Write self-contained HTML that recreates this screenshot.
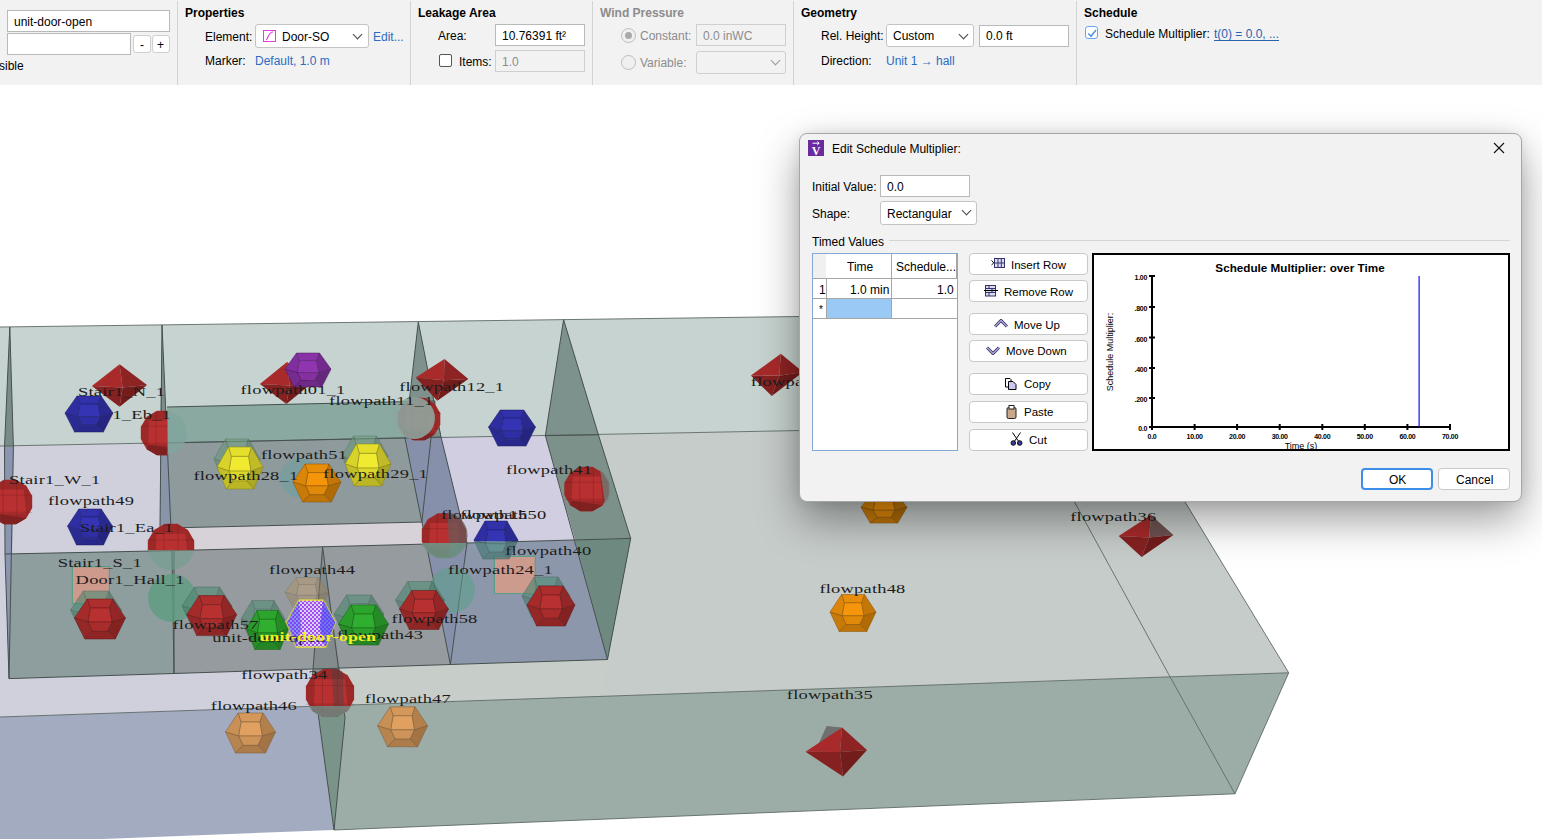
<!DOCTYPE html>
<html><head><meta charset="utf-8">
<style>
html,body{margin:0;padding:0;}
body{width:1542px;height:839px;overflow:hidden;position:relative;background:#fff;font-family:"Liberation Sans",sans-serif;font-size:12px;color:#000;}
.t{position:absolute;white-space:nowrap;line-height:14px;font-size:12px;}
.b{font-weight:bold;}
.lk{color:#2b6cc4;}
.gr{color:#8c8c8c;}
.box{position:absolute;box-sizing:border-box;background:#fff;border:1px solid #b9b9b9;}
.dis{background:#f2f2f2;border-color:#cfcfcf;}
.rnd{border-radius:3px;}
.sep{position:absolute;top:1px;width:1px;height:84px;background:#d3d3d3;}
.chev{position:absolute;width:6px;height:6px;border-right:1px solid #444;border-bottom:1px solid #444;transform:rotate(45deg);}
#tb{position:absolute;left:0;top:0;width:1542px;height:85px;background:#f2f2f2;}
#scene{position:absolute;left:0;top:0;}
</style></head><body>
<svg id="scene" width="1542" height="839" viewBox="0 0 1542 839">
<polygon points="0.0,327.0 1070.4,313.0 1137.8,424.0 0.0,446.0" fill="#c7d3d0" />
<polygon points="0.0,446.0 1137.8,424.0 1288.7,672.8 0.0,717.0" fill="#c6ccc9" />
<polygon points="0.0,446.0 165.0,443.0 441.0,437.0 545.4,435.6 575.0,539.3 337.0,705.4 0.0,717.0" fill="#cfd0dc" />
<polygon points="320.0,670.0 610.0,659.0 600.0,696.4 337.0,705.4" fill="#c7ceca" />
<polygon points="0.0,717.0 337.0,705.4 334.0,830.0 0.0,843.0" fill="#a2abc0" />
<polygon points="337.0,705.4 1288.7,672.8 1235.0,793.8 334.0,830.0" fill="#9cada7" />
<polygon points="167.0,407.0 435.0,401.0 441.0,437.0 167.0,443.0" fill="#8aa9a1" />
<polygon points="167.0,443.0 441.0,437.0 423.0,522.0 167.0,528.0" fill="#8f9a9d" />
<polygon points="165.0,528.0 423.0,522.0 467.0,543.0 174.0,550.6" fill="#d6d2d8" />
<polygon points="5.0,554.0 174.0,550.6 174.0,673.5 9.0,678.6" fill="#8e9d9e" />
<polygon points="174.0,550.6 467.0,543.0 450.4,664.5 174.0,673.5" fill="#959b9e" />
<polygon points="467.0,543.0 630.7,538.4 607.5,659.5 450.4,664.5" fill="#8c97ab" />
<polygon points="441.0,437.0 545.4,435.6 575.0,539.3 467.0,543.0" fill="#d0cee0" />
<polygon points="563.6,319.7 598.4,434.8 545.4,435.6" fill="#7d928c" />
<polygon points="545.4,435.6 598.4,434.8 630.7,538.4 575.0,539.3" fill="#7c918a" />
<polygon points="575.0,539.3 630.7,538.4 607.5,659.5" fill="#6e8a80" />
<polygon points="418.3,322.0 441.0,437.0 405.0,438.0" fill="#7e918d" />
<polygon points="405.0,438.0 441.0,437.0 467.0,543.0 450.4,664.5 422.0,521.0" fill="#8790aa" />
<polygon points="162.0,325.0 167.0,443.0 160.0,443.0" fill="#7c8e8a" />
<polygon points="160.0,443.0 167.0,443.0 175.0,553.0 160.0,527.0" fill="#8a94a8" />
<polygon points="9.8,327.0 13.4,447.0 4.5,447.0" fill="#7a8c88" />
<polygon points="4.5,447.0 13.4,447.0 12.0,560.0 9.0,678.6 5.0,554.0" fill="#8b95b0" />
<polygon points="322.6,547.0 340.5,673.7 312.7,673.7" fill="#838b8d" />
<polygon points="312.7,673.7 340.5,673.7 345.0,718.0 334.0,830.0" fill="#7a948a" />
<polyline points="0.0,327.0 1070.4,313.0" fill="none" stroke="#5f6a67" stroke-width="0.9" stroke-opacity="1"/>
<polyline points="0.0,446.0 1137.8,424.0" fill="none" stroke="#5f6a67" stroke-width="0.9" stroke-opacity="1"/>
<polyline points="0.0,717.0 1288.7,672.8" fill="none" stroke="#5f6a67" stroke-width="0.9" stroke-opacity="1"/>
<polyline points="334.0,830.0 1235.0,793.8 1288.7,672.8" fill="none" stroke="#5f6a67" stroke-width="0.9" stroke-opacity="1"/>
<polyline points="1070.4,313.0 1288.7,672.8" fill="none" stroke="#5f6a67" stroke-width="0.9" stroke-opacity="1"/>
<polyline points="1074.0,501.0 1169.6,676.0 1235.0,793.8" fill="none" stroke="#5f6a67" stroke-width="0.9" stroke-opacity="1"/>
<polyline points="167.0,407.0 435.0,401.0" fill="none" stroke="#46504e" stroke-width="1" stroke-opacity="1"/>
<polyline points="167.0,443.0 441.0,437.0" fill="none" stroke="#46504e" stroke-width="1" stroke-opacity="1"/>
<polyline points="167.0,528.0 423.0,522.0" fill="none" stroke="#46504e" stroke-width="1" stroke-opacity="1"/>
<polyline points="5.0,554.0 174.0,550.6 467.0,543.0 630.7,538.4" fill="none" stroke="#46504e" stroke-width="1" stroke-opacity="1"/>
<polyline points="9.0,678.6 174.0,673.5 450.4,664.5 607.5,659.5" fill="none" stroke="#46504e" stroke-width="1" stroke-opacity="1"/>
<polyline points="5.0,554.0 9.0,678.6" fill="none" stroke="#46504e" stroke-width="1" stroke-opacity="1"/>
<polyline points="174.0,550.0 174.0,673.5" fill="none" stroke="#46504e" stroke-width="1" stroke-opacity="1"/>
<polyline points="563.6,319.7 598.4,434.8 630.7,538.4 607.5,659.5" fill="none" stroke="#46504e" stroke-width="1" stroke-opacity="1"/>
<polyline points="563.6,319.7 545.4,435.6 607.5,659.5" fill="none" stroke="#46504e" stroke-width="1" stroke-opacity="1"/>
<polyline points="545.4,435.6 598.4,434.8" fill="none" stroke="#46504e" stroke-width="1" stroke-opacity="1"/>
<polyline points="418.3,322.0 441.0,437.0 467.0,543.0 450.4,664.5 405.0,438.0 418.3,322.0" fill="none" stroke="#46504e" stroke-width="1" stroke-opacity="1"/>
<polyline points="435.0,401.0 422.0,521.0" fill="none" stroke="#46504e" stroke-width="1" stroke-opacity="1"/>
<polyline points="162.0,325.0 172.0,553.0 174.0,673.5" fill="none" stroke="#46504e" stroke-width="1" stroke-opacity="1"/>
<polyline points="162.0,325.0 160.0,527.0" fill="none" stroke="#46504e" stroke-width="1" stroke-opacity="1"/>
<polyline points="9.8,327.0 13.4,447.0 9.0,678.6" fill="none" stroke="#46504e" stroke-width="1" stroke-opacity="1"/>
<polyline points="9.8,327.0 4.5,447.0 5.0,554.0" fill="none" stroke="#46504e" stroke-width="1" stroke-opacity="1"/>
<polyline points="322.6,547.0 345.0,718.0 334.0,830.0 312.7,673.7 322.6,547.0" fill="none" stroke="#46504e" stroke-width="1" stroke-opacity="1"/>
<polygon points="119.6,364.2 122.6,387.5 91.9,386.0" fill="#a82a2a" />
<polygon points="119.6,364.2 147.0,385.0 122.6,387.5" fill="#8e2323" />
<polygon points="91.9,386.0 122.6,387.5 119.6,406.7" fill="#862121" />
<polygon points="122.6,387.5 147.0,385.0 119.6,406.7" fill="#721c1c" />
<polygon points="287.0,362.0 289.7,385.5 259.9,384.0" fill="#a82a2a" />
<polygon points="287.0,362.0 312.0,383.0 289.7,385.5" fill="#8e2323" />
<polygon points="259.9,384.0 289.7,385.5 286.4,404.0" fill="#862121" />
<polygon points="289.7,385.5 312.0,383.0 286.4,404.0" fill="#721c1c" />
<polygon points="444.5,358.9 443.9,380.2 415.6,377.5" fill="#a82a2a" />
<polygon points="444.5,358.9 468.3,379.0 443.9,380.2" fill="#8e2323" />
<polygon points="415.6,377.5 443.9,380.2 437.3,400.7" fill="#862121" />
<polygon points="443.9,380.2 468.3,379.0 437.3,400.7" fill="#721c1c" />
<polygon points="780.8,353.7 779.3,375.8 750.8,375.6" fill="#a82a2a" />
<polygon points="780.8,353.7 803.0,372.0 779.3,375.8" fill="#8e2323" />
<polygon points="750.8,375.6 779.3,375.8 771.8,396.0" fill="#862121" />
<polygon points="779.3,375.8 803.0,372.0 771.8,396.0" fill="#721c1c" />
<polygon points="1151.0,515.0 1149.3,537.5 1118.7,536.0" fill="#a82a2a" />
<polygon points="1151.0,515.0 1173.4,535.0 1149.3,537.5" fill="#6e5250" />
<polygon points="1118.7,536.0 1149.3,537.5 1141.6,557.0" fill="#862121" />
<polygon points="1149.3,537.5 1173.4,535.0 1141.6,557.0" fill="#721c1c" />
<polygon points="826.6,726.0 842.0,727.6 818.0,745.0" fill="#707070" />
<polygon points="842.0,727.6 840.0,752.0 805.5,751.8" fill="#a82a2a" />
<polygon points="842.0,727.6 867.0,750.0 840.0,752.0" fill="#8e2323" />
<polygon points="805.5,751.8 840.0,752.0 843.0,776.5" fill="#862121" />
<polygon points="840.0,752.0 867.0,750.0 843.0,776.5" fill="#721c1c" />
<circle cx="300" cy="478" r="20" fill="#6aa0a0" fill-opacity="0.5"/>
<circle cx="172" cy="598" r="24" fill="#5c9e80" fill-opacity="0.78"/>
<circle cx="452" cy="590" r="23" fill="#5aa088" fill-opacity="0.55"/>
<g opacity="0.45">
<polygon points="296.0,577.5 318.0,577.5 315.4,584.5 298.6,584.5" fill="#be986a" stroke="#6e583d" stroke-width="0.5" />
<polygon points="298.6,584.5 315.4,584.5 317.6,595.3 296.4,595.3" fill="#c8a070" stroke="#6e583d" stroke-width="0.5" />
<polygon points="285.0,592.2 296.0,577.5 298.6,584.5 296.4,595.3" fill="#b49064" stroke="#6e583d" stroke-width="0.5" />
<polygon points="329.0,592.2 318.0,577.5 315.4,584.5 317.6,595.3" fill="#a08059" stroke="#6e583d" stroke-width="0.5" />
<polygon points="296.4,595.3 317.6,595.3 313.6,602.6 300.4,602.6" fill="#b89367" stroke="#6e583d" stroke-width="0.5" />
<polygon points="285.0,592.2 296.4,595.3 300.4,602.6 293.8,608.5" fill="#a4835b" stroke="#6e583d" stroke-width="0.5" />
<polygon points="329.0,592.2 317.6,595.3 313.6,602.6 320.2,608.5" fill="#907350" stroke="#6e583d" stroke-width="0.5" />
<polygon points="300.4,602.6 313.6,602.6 320.2,608.5 293.8,608.5" fill="#9c7c57" stroke="#6e583d" stroke-width="0.5" />
</g>
<polygon points="72.4,566.7 109.4,566.7 109.4,603.7 72.4,603.7" fill="#d89a88" fill-opacity="0.85" stroke="#5aa088" stroke-width="1.2" />
<polygon points="494.4,556.3 535.3,556.3 535.3,593.5 494.4,593.5" fill="#d89a88" fill-opacity="0.85" stroke="#5aa088" stroke-width="1.2" />
<g opacity="1">
<polygon points="77.0,396.0 101.0,396.0 98.1,404.1 79.9,404.1" fill="#3131ab" stroke="#1c1c63" stroke-width="0.5" />
<polygon points="79.9,404.1 98.1,404.1 100.5,416.7 77.5,416.7" fill="#3434b4" stroke="#1c1c63" stroke-width="0.5" />
<polygon points="65.0,413.1 77.0,396.0 79.9,404.1 77.5,416.7" fill="#2e2ea2" stroke="#1c1c63" stroke-width="0.5" />
<polygon points="113.0,413.1 101.0,396.0 98.1,404.1 100.5,416.7" fill="#292990" stroke="#1c1c63" stroke-width="0.5" />
<polygon points="77.5,416.7 100.5,416.7 96.2,425.2 81.8,425.2" fill="#2f2fa5" stroke="#1c1c63" stroke-width="0.5" />
<polygon points="65.0,413.1 77.5,416.7 81.8,425.2 74.6,432.0" fill="#2a2a93" stroke="#1c1c63" stroke-width="0.5" />
<polygon points="113.0,413.1 100.5,416.7 96.2,425.2 103.4,432.0" fill="#252581" stroke="#1c1c63" stroke-width="0.5" />
<polygon points="81.8,425.2 96.2,425.2 103.4,432.0 74.6,432.0" fill="#28288c" stroke="#1c1c63" stroke-width="0.5" />
</g>
<g opacity="1">
<polygon points="78.8,509.0 101.2,509.0 98.5,517.1 81.5,517.1" fill="#3131ab" stroke="#1c1c63" stroke-width="0.5" />
<polygon points="81.5,517.1 98.5,517.1 100.8,529.7 79.2,529.7" fill="#3434b4" stroke="#1c1c63" stroke-width="0.5" />
<polygon points="67.5,526.1 78.8,509.0 81.5,517.1 79.2,529.7" fill="#2e2ea2" stroke="#1c1c63" stroke-width="0.5" />
<polygon points="112.5,526.1 101.2,509.0 98.5,517.1 100.8,529.7" fill="#292990" stroke="#1c1c63" stroke-width="0.5" />
<polygon points="79.2,529.7 100.8,529.7 96.8,538.2 83.2,538.2" fill="#2f2fa5" stroke="#1c1c63" stroke-width="0.5" />
<polygon points="67.5,526.1 79.2,529.7 83.2,538.2 76.5,545.0" fill="#2a2a93" stroke="#1c1c63" stroke-width="0.5" />
<polygon points="112.5,526.1 100.8,529.7 96.8,538.2 103.5,545.0" fill="#252581" stroke="#1c1c63" stroke-width="0.5" />
<polygon points="83.2,538.2 96.8,538.2 103.5,545.0 76.5,545.0" fill="#28288c" stroke="#1c1c63" stroke-width="0.5" />
</g>
<g opacity="1">
<polygon points="500.2,410.0 523.8,410.0 520.9,418.1 503.1,418.1" fill="#3131ab" stroke="#1c1c63" stroke-width="0.5" />
<polygon points="503.1,418.1 520.9,418.1 523.3,430.7 500.7,430.7" fill="#3434b4" stroke="#1c1c63" stroke-width="0.5" />
<polygon points="488.5,427.1 500.2,410.0 503.1,418.1 500.7,430.7" fill="#2e2ea2" stroke="#1c1c63" stroke-width="0.5" />
<polygon points="535.5,427.1 523.8,410.0 520.9,418.1 523.3,430.7" fill="#292990" stroke="#1c1c63" stroke-width="0.5" />
<polygon points="500.7,430.7 523.3,430.7 519.0,439.2 504.9,439.2" fill="#2f2fa5" stroke="#1c1c63" stroke-width="0.5" />
<polygon points="488.5,427.1 500.7,430.7 504.9,439.2 497.9,446.0" fill="#2a2a93" stroke="#1c1c63" stroke-width="0.5" />
<polygon points="535.5,427.1 523.3,430.7 519.0,439.2 526.1,446.0" fill="#252581" stroke="#1c1c63" stroke-width="0.5" />
<polygon points="504.9,439.2 519.0,439.2 526.1,446.0 497.9,446.0" fill="#28288c" stroke="#1c1c63" stroke-width="0.5" />
</g>
<clipPath id="bg40a"><rect x="460" y="500" width="80" height="41.5"/></clipPath><g clip-path="url(#bg40a)">
<g opacity="1">
<polygon points="485.0,521.0 507.0,521.0 504.4,530.0 487.6,530.0" fill="#3131ab" stroke="#1c1c63" stroke-width="0.5" />
<polygon points="487.6,530.0 504.4,530.0 506.6,544.0 485.4,544.0" fill="#3434b4" stroke="#1c1c63" stroke-width="0.5" />
<polygon points="474.0,540.0 485.0,521.0 487.6,530.0 485.4,544.0" fill="#2e2ea2" stroke="#1c1c63" stroke-width="0.5" />
<polygon points="518.0,540.0 507.0,521.0 504.4,530.0 506.6,544.0" fill="#292990" stroke="#1c1c63" stroke-width="0.5" />
<polygon points="485.4,544.0 506.6,544.0 502.6,553.4 489.4,553.4" fill="#2f2fa5" stroke="#1c1c63" stroke-width="0.5" />
<polygon points="474.0,540.0 485.4,544.0 489.4,553.4 482.8,561.0" fill="#2a2a93" stroke="#1c1c63" stroke-width="0.5" />
<polygon points="518.0,540.0 506.6,544.0 502.6,553.4 509.2,561.0" fill="#252581" stroke="#1c1c63" stroke-width="0.5" />
<polygon points="489.4,553.4 502.6,553.4 509.2,561.0 482.8,561.0" fill="#28288c" stroke="#1c1c63" stroke-width="0.5" />
</g>
</g>
<clipPath id="bg40b"><rect x="460" y="541.5" width="80" height="30"/></clipPath><g clip-path="url(#bg40b)">
<g opacity="0.75">
<polygon points="485.0,523.0 507.0,523.0 504.4,531.1 487.6,531.1" fill="#5a9290" stroke="#345453" stroke-width="0.5" />
<polygon points="487.6,531.1 504.4,531.1 506.6,543.7 485.4,543.7" fill="#5f9a98" stroke="#345453" stroke-width="0.5" />
<polygon points="474.0,540.1 485.0,523.0 487.6,531.1 485.4,543.7" fill="#558a88" stroke="#345453" stroke-width="0.5" />
<polygon points="518.0,540.1 507.0,523.0 504.4,531.1 506.6,543.7" fill="#4c7b79" stroke="#345453" stroke-width="0.5" />
<polygon points="485.4,543.7 506.6,543.7 502.6,552.2 489.4,552.2" fill="#578d8b" stroke="#345453" stroke-width="0.5" />
<polygon points="474.0,540.1 485.4,543.7 489.4,552.2 482.8,559.0" fill="#4d7e7c" stroke="#345453" stroke-width="0.5" />
<polygon points="518.0,540.1 506.6,543.7 502.6,552.2 509.2,559.0" fill="#446e6d" stroke="#345453" stroke-width="0.5" />
<polygon points="489.4,552.2 502.6,552.2 509.2,559.0 482.8,559.0" fill="#4a7876" stroke="#345453" stroke-width="0.5" />
</g>
</g>
<g opacity="1">
<polygon points="296.5,353.0 319.5,353.0 316.7,360.6 299.3,360.6" fill="#8832a7" stroke="#4f1d60" stroke-width="0.5" />
<polygon points="299.3,360.6 316.7,360.6 319.0,372.6 297.0,372.6" fill="#9035b0" stroke="#4f1d60" stroke-width="0.5" />
<polygon points="285.0,369.1 296.5,353.0 299.3,360.6 297.0,372.6" fill="#812f9e" stroke="#4f1d60" stroke-width="0.5" />
<polygon points="331.0,369.1 319.5,353.0 316.7,360.6 319.0,372.6" fill="#732a8c" stroke="#4f1d60" stroke-width="0.5" />
<polygon points="297.0,372.6 319.0,372.6 314.9,380.5 301.1,380.5" fill="#8430a1" stroke="#4f1d60" stroke-width="0.5" />
<polygon points="285.0,369.1 297.0,372.6 301.1,380.5 294.2,387.0" fill="#762b90" stroke="#4f1d60" stroke-width="0.5" />
<polygon points="331.0,369.1 319.0,372.6 314.9,380.5 321.8,387.0" fill="#67267e" stroke="#4f1d60" stroke-width="0.5" />
<polygon points="301.1,380.5 314.9,380.5 321.8,387.0 294.2,387.0" fill="#702989" stroke="#4f1d60" stroke-width="0.5" />
</g>
<g opacity="0.65">
<polygon points="225.5,439.0 248.5,439.0 245.7,448.4 228.3,448.4" fill="#739f83" stroke="#435c4b" stroke-width="0.5" />
<polygon points="228.3,448.4 245.7,448.4 248.0,463.1 226.0,463.1" fill="#7aa88a" stroke="#435c4b" stroke-width="0.5" />
<polygon points="214.0,458.9 225.5,439.0 228.3,448.4 226.0,463.1" fill="#6d977c" stroke="#435c4b" stroke-width="0.5" />
<polygon points="260.0,458.9 248.5,439.0 245.7,448.4 248.0,463.1" fill="#61866e" stroke="#435c4b" stroke-width="0.5" />
<polygon points="226.0,463.1 248.0,463.1 243.9,473.0 230.1,473.0" fill="#709a7e" stroke="#435c4b" stroke-width="0.5" />
<polygon points="214.0,458.9 226.0,463.1 230.1,473.0 223.2,481.0" fill="#648971" stroke="#435c4b" stroke-width="0.5" />
<polygon points="260.0,458.9 248.0,463.1 243.9,473.0 250.8,481.0" fill="#577863" stroke="#435c4b" stroke-width="0.5" />
<polygon points="230.1,473.0 243.9,473.0 250.8,481.0 223.2,481.0" fill="#5f836b" stroke="#435c4b" stroke-width="0.5" />
</g>
<g opacity="1">
<polygon points="228.5,447.0 251.5,447.0 248.7,456.4 231.3,456.4" fill="#e4de2d" stroke="#84801a" stroke-width="0.5" />
<polygon points="231.3,456.4 248.7,456.4 251.0,471.1 229.0,471.1" fill="#f0ea30" stroke="#84801a" stroke-width="0.5" />
<polygon points="217.0,466.9 228.5,447.0 231.3,456.4 229.0,471.1" fill="#d8d22b" stroke="#84801a" stroke-width="0.5" />
<polygon points="263.0,466.9 251.5,447.0 248.7,456.4 251.0,471.1" fill="#c0bb26" stroke="#84801a" stroke-width="0.5" />
<polygon points="229.0,471.1 251.0,471.1 246.9,481.0 233.1,481.0" fill="#dcd72c" stroke="#84801a" stroke-width="0.5" />
<polygon points="217.0,466.9 229.0,471.1 233.1,481.0 226.2,489.0" fill="#c4bf27" stroke="#84801a" stroke-width="0.5" />
<polygon points="263.0,466.9 251.0,471.1 246.9,481.0 253.8,489.0" fill="#aca822" stroke="#84801a" stroke-width="0.5" />
<polygon points="233.1,481.0 246.9,481.0 253.8,489.0 226.2,489.0" fill="#bbb625" stroke="#84801a" stroke-width="0.5" />
</g>
<g opacity="0.65">
<polygon points="353.5,436.0 376.5,436.0 373.7,445.4 356.3,445.4" fill="#739f83" stroke="#435c4b" stroke-width="0.5" />
<polygon points="356.3,445.4 373.7,445.4 376.0,460.1 354.0,460.1" fill="#7aa88a" stroke="#435c4b" stroke-width="0.5" />
<polygon points="342.0,455.9 353.5,436.0 356.3,445.4 354.0,460.1" fill="#6d977c" stroke="#435c4b" stroke-width="0.5" />
<polygon points="388.0,455.9 376.5,436.0 373.7,445.4 376.0,460.1" fill="#61866e" stroke="#435c4b" stroke-width="0.5" />
<polygon points="354.0,460.1 376.0,460.1 371.9,470.0 358.1,470.0" fill="#709a7e" stroke="#435c4b" stroke-width="0.5" />
<polygon points="342.0,455.9 354.0,460.1 358.1,470.0 351.2,478.0" fill="#648971" stroke="#435c4b" stroke-width="0.5" />
<polygon points="388.0,455.9 376.0,460.1 371.9,470.0 378.8,478.0" fill="#577863" stroke="#435c4b" stroke-width="0.5" />
<polygon points="358.1,470.0 371.9,470.0 378.8,478.0 351.2,478.0" fill="#5f836b" stroke="#435c4b" stroke-width="0.5" />
</g>
<g opacity="1">
<polygon points="356.5,444.0 379.5,444.0 376.7,453.4 359.3,453.4" fill="#e4de2d" stroke="#84801a" stroke-width="0.5" />
<polygon points="359.3,453.4 376.7,453.4 379.0,468.1 357.0,468.1" fill="#f0ea30" stroke="#84801a" stroke-width="0.5" />
<polygon points="345.0,463.9 356.5,444.0 359.3,453.4 357.0,468.1" fill="#d8d22b" stroke="#84801a" stroke-width="0.5" />
<polygon points="391.0,463.9 379.5,444.0 376.7,453.4 379.0,468.1" fill="#c0bb26" stroke="#84801a" stroke-width="0.5" />
<polygon points="357.0,468.1 379.0,468.1 374.9,478.0 361.1,478.0" fill="#dcd72c" stroke="#84801a" stroke-width="0.5" />
<polygon points="345.0,463.9 357.0,468.1 361.1,478.0 354.2,486.0" fill="#c4bf27" stroke="#84801a" stroke-width="0.5" />
<polygon points="391.0,463.9 379.0,468.1 374.9,478.0 381.8,486.0" fill="#aca822" stroke="#84801a" stroke-width="0.5" />
<polygon points="361.1,478.0 374.9,478.0 381.8,486.0 354.2,486.0" fill="#bbb625" stroke="#84801a" stroke-width="0.5" />
</g>
<g opacity="1">
<polygon points="305.0,464.0 329.0,464.0 326.1,472.6 307.9,472.6" fill="#e88d09" stroke="#865105" stroke-width="0.5" />
<polygon points="307.9,472.6 326.1,472.6 328.5,485.9 305.5,485.9" fill="#f5950a" stroke="#865105" stroke-width="0.5" />
<polygon points="293.0,482.1 305.0,464.0 307.9,472.6 305.5,485.9" fill="#dc8609" stroke="#865105" stroke-width="0.5" />
<polygon points="341.0,482.1 329.0,464.0 326.1,472.6 328.5,485.9" fill="#c47708" stroke="#865105" stroke-width="0.5" />
<polygon points="305.5,485.9 328.5,485.9 324.2,494.8 309.8,494.8" fill="#e18909" stroke="#865105" stroke-width="0.5" />
<polygon points="293.0,482.1 305.5,485.9 309.8,494.8 302.6,502.0" fill="#c87a08" stroke="#865105" stroke-width="0.5" />
<polygon points="341.0,482.1 328.5,485.9 324.2,494.8 331.4,502.0" fill="#b06b07" stroke="#865105" stroke-width="0.5" />
<polygon points="309.8,494.8 324.2,494.8 331.4,502.0 302.6,502.0" fill="#bf7407" stroke="#865105" stroke-width="0.5" />
</g>
<g opacity="1">
<polygon points="841.5,594.5 864.5,594.5 861.7,602.8 844.3,602.8" fill="#e88d09" stroke="#865105" stroke-width="0.5" />
<polygon points="844.3,602.8 861.7,602.8 864.0,615.8 842.0,615.8" fill="#f5950a" stroke="#865105" stroke-width="0.5" />
<polygon points="830.0,612.1 841.5,594.5 844.3,602.8 842.0,615.8" fill="#dc8609" stroke="#865105" stroke-width="0.5" />
<polygon points="876.0,612.1 864.5,594.5 861.7,602.8 864.0,615.8" fill="#c47708" stroke="#865105" stroke-width="0.5" />
<polygon points="842.0,615.8 864.0,615.8 859.9,624.5 846.1,624.5" fill="#e18909" stroke="#865105" stroke-width="0.5" />
<polygon points="830.0,612.1 842.0,615.8 846.1,624.5 839.2,631.5" fill="#c87a08" stroke="#865105" stroke-width="0.5" />
<polygon points="876.0,612.1 864.0,615.8 859.9,624.5 866.8,631.5" fill="#b06b07" stroke="#865105" stroke-width="0.5" />
<polygon points="846.1,624.5 859.9,624.5 866.8,631.5 839.2,631.5" fill="#bf7407" stroke="#865105" stroke-width="0.5" />
</g>
<g opacity="1">
<polygon points="872.5,493.0 895.5,493.0 892.7,499.8 875.3,499.8" fill="#e88d09" stroke="#865105" stroke-width="0.5" />
<polygon points="875.3,499.8 892.7,499.8 895.0,510.2 873.0,510.2" fill="#f5950a" stroke="#865105" stroke-width="0.5" />
<polygon points="861.0,507.2 872.5,493.0 875.3,499.8 873.0,510.2" fill="#dc8609" stroke="#865105" stroke-width="0.5" />
<polygon points="907.0,507.2 895.5,493.0 892.7,499.8 895.0,510.2" fill="#c47708" stroke="#865105" stroke-width="0.5" />
<polygon points="873.0,510.2 895.0,510.2 890.9,517.3 877.1,517.3" fill="#e18909" stroke="#865105" stroke-width="0.5" />
<polygon points="861.0,507.2 873.0,510.2 877.1,517.3 870.2,523.0" fill="#c87a08" stroke="#865105" stroke-width="0.5" />
<polygon points="907.0,507.2 895.0,510.2 890.9,517.3 897.8,523.0" fill="#b06b07" stroke="#865105" stroke-width="0.5" />
<polygon points="877.1,517.3 890.9,517.3 897.8,523.0 870.2,523.0" fill="#bf7407" stroke="#865105" stroke-width="0.5" />
</g>
<g opacity="1">
<polygon points="238.0,713.0 263.0,713.0 260.0,722.0 241.0,722.0" fill="#d4985b" stroke="#7b5834" stroke-width="0.5" />
<polygon points="241.0,722.0 260.0,722.0 262.5,736.0 238.5,736.0" fill="#e0a060" stroke="#7b5834" stroke-width="0.5" />
<polygon points="225.5,732.0 238.0,713.0 241.0,722.0 238.5,736.0" fill="#c99056" stroke="#7b5834" stroke-width="0.5" />
<polygon points="275.5,732.0 263.0,713.0 260.0,722.0 262.5,736.0" fill="#b3804c" stroke="#7b5834" stroke-width="0.5" />
<polygon points="238.5,736.0 262.5,736.0 258.0,745.4 243.0,745.4" fill="#ce9358" stroke="#7b5834" stroke-width="0.5" />
<polygon points="225.5,732.0 238.5,736.0 243.0,745.4 235.5,753.0" fill="#b7834e" stroke="#7b5834" stroke-width="0.5" />
<polygon points="275.5,732.0 262.5,736.0 258.0,745.4 265.5,753.0" fill="#a17345" stroke="#7b5834" stroke-width="0.5" />
<polygon points="243.0,745.4 258.0,745.4 265.5,753.0 235.5,753.0" fill="#ae7c4a" stroke="#7b5834" stroke-width="0.5" />
</g>
<g opacity="1">
<polygon points="390.1,706.8 415.1,706.8 412.1,715.8 393.1,715.8" fill="#d4985b" stroke="#7b5834" stroke-width="0.5" />
<polygon points="393.1,715.8 412.1,715.8 414.6,729.8 390.6,729.8" fill="#e0a060" stroke="#7b5834" stroke-width="0.5" />
<polygon points="377.6,725.8 390.1,706.8 393.1,715.8 390.6,729.8" fill="#c99056" stroke="#7b5834" stroke-width="0.5" />
<polygon points="427.6,725.8 415.1,706.8 412.1,715.8 414.6,729.8" fill="#b3804c" stroke="#7b5834" stroke-width="0.5" />
<polygon points="390.6,729.8 414.6,729.8 410.1,739.2 395.1,739.2" fill="#ce9358" stroke="#7b5834" stroke-width="0.5" />
<polygon points="377.6,725.8 390.6,729.8 395.1,739.2 387.6,746.8" fill="#b7834e" stroke="#7b5834" stroke-width="0.5" />
<polygon points="427.6,725.8 414.6,729.8 410.1,739.2 417.6,746.8" fill="#a17345" stroke="#7b5834" stroke-width="0.5" />
<polygon points="395.1,739.2 410.1,739.2 417.6,746.8 387.6,746.8" fill="#ae7c4a" stroke="#7b5834" stroke-width="0.5" />
</g>
<clipPath id="c1"><rect x="100" y="400" width="67.5" height="70"/></clipPath><g clip-path="url(#c1)">
<g opacity="1">
<polygon points="185.2,439.0 179.3,449.3 169.0,455.2 157.0,455.2 146.7,449.3 140.8,439.0 140.8,427.0 146.7,416.7 157.0,410.8 169.0,410.8 179.3,416.7 185.2,427.0" fill="#9c2828" />
<polygon points="149.2,420.4 176.8,420.4 179.1,444.5 148.1,444.5" fill="#b83030" />
<polygon points="179.3,449.3 169.0,455.2 157.0,455.2 146.7,449.3 148.1,444.5" fill="#802121" />
<polyline points="156.1,411.1 156.1,454.9" fill="none" stroke="#6e1c1c" stroke-width="0.6" stroke-opacity="0.5"/>
<polyline points="169.9,411.1 169.9,454.9" fill="none" stroke="#6e1c1c" stroke-width="0.6" stroke-opacity="0.5"/>
<polyline points="140.7,426.1 185.3,426.1" fill="none" stroke="#6e1c1c" stroke-width="0.6" stroke-opacity="0.5"/>
<polyline points="141.2,443.4 184.8,443.4" fill="none" stroke="#6e1c1c" stroke-width="0.6" stroke-opacity="0.5"/>
</g>
</g>
<clipPath id="c1b"><rect x="167.5" y="400" width="60" height="70"/></clipPath><g clip-path="url(#c1b)">
<circle cx="165" cy="433" r="22" fill="#7fa59c" fill-opacity="0.75"/>
</g>
<g opacity="1">
<polygon points="32.2,508.0 26.3,518.3 16.0,524.2 4.0,524.2 -6.3,518.3 -12.2,508.0 -12.2,496.0 -6.3,485.7 4.0,479.8 16.0,479.8 26.3,485.7 32.2,496.0" fill="#9c2828" />
<polygon points="-3.8,489.4 23.8,489.4 26.1,513.5 -5.0,513.5" fill="#b83030" />
<polygon points="26.3,518.3 16.0,524.2 4.0,524.2 -6.3,518.3 -5.0,513.5" fill="#802121" />
<polyline points="3.1,480.1 3.1,523.9" fill="none" stroke="#6e1c1c" stroke-width="0.6" stroke-opacity="0.5"/>
<polyline points="16.9,480.1 16.9,523.9" fill="none" stroke="#6e1c1c" stroke-width="0.6" stroke-opacity="0.5"/>
<polyline points="-12.3,495.1 32.3,495.1" fill="none" stroke="#6e1c1c" stroke-width="0.6" stroke-opacity="0.5"/>
<polyline points="-11.8,512.4 31.8,512.4" fill="none" stroke="#6e1c1c" stroke-width="0.6" stroke-opacity="0.5"/>
</g>
<clipPath id="c2"><rect x="130" y="515" width="80" height="35.5"/></clipPath><g clip-path="url(#c2)">
<g opacity="1">
<polygon points="194.2,553.2 188.0,564.0 177.2,570.2 164.8,570.2 154.0,564.0 147.8,553.2 147.8,540.8 154.0,530.0 164.8,523.8 177.2,523.8 188.0,530.0 194.2,540.8" fill="#9c2828" />
<polygon points="156.6,533.8 185.4,533.8 187.8,559.0 155.4,559.0" fill="#b83030" />
<polygon points="188.0,564.0 177.2,570.2 164.8,570.2 154.0,564.0 155.4,559.0" fill="#802121" />
<polyline points="163.8,524.2 163.8,569.8" fill="none" stroke="#6e1c1c" stroke-width="0.6" stroke-opacity="0.5"/>
<polyline points="178.2,524.2 178.2,569.8" fill="none" stroke="#6e1c1c" stroke-width="0.6" stroke-opacity="0.5"/>
<polyline points="147.7,539.8 194.3,539.8" fill="none" stroke="#6e1c1c" stroke-width="0.6" stroke-opacity="0.5"/>
<polyline points="148.2,557.8 193.8,557.8" fill="none" stroke="#6e1c1c" stroke-width="0.6" stroke-opacity="0.5"/>
</g>
</g>
<clipPath id="c3"><rect x="130" y="550" width="80" height="30"/></clipPath><g clip-path="url(#c3)">
<circle cx="171" cy="547" r="23" fill="#6e9e8c" fill-opacity="0.55"/>
</g>
<g opacity="0.65">
<polygon points="83.2,591.0 108.8,591.0 105.7,600.0 86.3,600.0" fill="#558e79" stroke="#315246" stroke-width="0.5" />
<polygon points="86.3,600.0 105.7,600.0 108.2,614.0 83.8,614.0" fill="#5a9680" stroke="#315246" stroke-width="0.5" />
<polygon points="70.5,610.0 83.2,591.0 86.3,600.0 83.8,614.0" fill="#518773" stroke="#315246" stroke-width="0.5" />
<polygon points="121.5,610.0 108.8,591.0 105.7,600.0 108.2,614.0" fill="#487866" stroke="#315246" stroke-width="0.5" />
<polygon points="83.8,614.0 108.2,614.0 103.7,623.4 88.3,623.4" fill="#528a75" stroke="#315246" stroke-width="0.5" />
<polygon points="70.5,610.0 83.8,614.0 88.3,623.4 80.7,631.0" fill="#497a68" stroke="#315246" stroke-width="0.5" />
<polygon points="121.5,610.0 108.2,614.0 103.7,623.4 111.3,631.0" fill="#406c5c" stroke="#315246" stroke-width="0.5" />
<polygon points="88.3,623.4 103.7,623.4 111.3,631.0 80.7,631.0" fill="#467563" stroke="#315246" stroke-width="0.5" />
</g>
<g opacity="1">
<polygon points="87.2,599.0 112.8,599.0 109.7,608.0 90.3,608.0" fill="#ae2d2d" stroke="#651a1a" stroke-width="0.5" />
<polygon points="90.3,608.0 109.7,608.0 112.2,622.0 87.8,622.0" fill="#b83030" stroke="#651a1a" stroke-width="0.5" />
<polygon points="74.5,618.0 87.2,599.0 90.3,608.0 87.8,622.0" fill="#a52b2b" stroke="#651a1a" stroke-width="0.5" />
<polygon points="125.5,618.0 112.8,599.0 109.7,608.0 112.2,622.0" fill="#932626" stroke="#651a1a" stroke-width="0.5" />
<polygon points="87.8,622.0 112.2,622.0 107.7,631.4 92.3,631.4" fill="#a92c2c" stroke="#651a1a" stroke-width="0.5" />
<polygon points="74.5,618.0 87.8,622.0 92.3,631.4 84.7,639.0" fill="#962727" stroke="#651a1a" stroke-width="0.5" />
<polygon points="125.5,618.0 112.2,622.0 107.7,631.4 115.3,639.0" fill="#842222" stroke="#651a1a" stroke-width="0.5" />
<polygon points="92.3,631.4 107.7,631.4 115.3,639.0 84.7,639.0" fill="#8f2525" stroke="#651a1a" stroke-width="0.5" />
</g>
<g opacity="0.65">
<polygon points="194.5,587.0 219.5,587.0 216.5,596.0 197.5,596.0" fill="#558e79" stroke="#315246" stroke-width="0.5" />
<polygon points="197.5,596.0 216.5,596.0 219.0,610.0 195.0,610.0" fill="#5a9680" stroke="#315246" stroke-width="0.5" />
<polygon points="182.0,606.0 194.5,587.0 197.5,596.0 195.0,610.0" fill="#518773" stroke="#315246" stroke-width="0.5" />
<polygon points="232.0,606.0 219.5,587.0 216.5,596.0 219.0,610.0" fill="#487866" stroke="#315246" stroke-width="0.5" />
<polygon points="195.0,610.0 219.0,610.0 214.5,619.4 199.5,619.4" fill="#528a75" stroke="#315246" stroke-width="0.5" />
<polygon points="182.0,606.0 195.0,610.0 199.5,619.4 192.0,627.0" fill="#497a68" stroke="#315246" stroke-width="0.5" />
<polygon points="232.0,606.0 219.0,610.0 214.5,619.4 222.0,627.0" fill="#406c5c" stroke="#315246" stroke-width="0.5" />
<polygon points="199.5,619.4 214.5,619.4 222.0,627.0 192.0,627.0" fill="#467563" stroke="#315246" stroke-width="0.5" />
</g>
<g opacity="1">
<polygon points="199.2,595.6 224.2,595.6 221.2,604.6 202.2,604.6" fill="#ae2d2d" stroke="#651a1a" stroke-width="0.5" />
<polygon points="202.2,604.6 221.2,604.6 223.7,618.6 199.7,618.6" fill="#b83030" stroke="#651a1a" stroke-width="0.5" />
<polygon points="186.7,614.6 199.2,595.6 202.2,604.6 199.7,618.6" fill="#a52b2b" stroke="#651a1a" stroke-width="0.5" />
<polygon points="236.7,614.6 224.2,595.6 221.2,604.6 223.7,618.6" fill="#932626" stroke="#651a1a" stroke-width="0.5" />
<polygon points="199.7,618.6 223.7,618.6 219.2,628.0 204.2,628.0" fill="#a92c2c" stroke="#651a1a" stroke-width="0.5" />
<polygon points="186.7,614.6 199.7,618.6 204.2,628.0 196.7,635.6" fill="#962727" stroke="#651a1a" stroke-width="0.5" />
<polygon points="236.7,614.6 223.7,618.6 219.2,628.0 226.7,635.6" fill="#842222" stroke="#651a1a" stroke-width="0.5" />
<polygon points="204.2,628.0 219.2,628.0 226.7,635.6 196.7,635.6" fill="#8f2525" stroke="#651a1a" stroke-width="0.5" />
</g>
<g opacity="0.65">
<polygon points="407.8,581.5 432.2,581.5 429.3,590.3 410.7,590.3" fill="#558e79" stroke="#315246" stroke-width="0.5" />
<polygon points="410.7,590.3 429.3,590.3 431.8,603.9 408.2,603.9" fill="#5a9680" stroke="#315246" stroke-width="0.5" />
<polygon points="395.5,600.0 407.8,581.5 410.7,590.3 408.2,603.9" fill="#518773" stroke="#315246" stroke-width="0.5" />
<polygon points="444.5,600.0 432.2,581.5 429.3,590.3 431.8,603.9" fill="#487866" stroke="#315246" stroke-width="0.5" />
<polygon points="408.2,603.9 431.8,603.9 427.4,613.1 412.6,613.1" fill="#528a75" stroke="#315246" stroke-width="0.5" />
<polygon points="395.5,600.0 408.2,603.9 412.6,613.1 405.3,620.5" fill="#497a68" stroke="#315246" stroke-width="0.5" />
<polygon points="444.5,600.0 431.8,603.9 427.4,613.1 434.7,620.5" fill="#406c5c" stroke="#315246" stroke-width="0.5" />
<polygon points="412.6,613.1 427.4,613.1 434.7,620.5 405.3,620.5" fill="#467563" stroke="#315246" stroke-width="0.5" />
</g>
<g opacity="1">
<polygon points="411.8,590.5 436.2,590.5 433.3,599.3 414.7,599.3" fill="#ae2d2d" stroke="#651a1a" stroke-width="0.5" />
<polygon points="414.7,599.3 433.3,599.3 435.8,612.9 412.2,612.9" fill="#b83030" stroke="#651a1a" stroke-width="0.5" />
<polygon points="399.5,609.0 411.8,590.5 414.7,599.3 412.2,612.9" fill="#a52b2b" stroke="#651a1a" stroke-width="0.5" />
<polygon points="448.5,609.0 436.2,590.5 433.3,599.3 435.8,612.9" fill="#932626" stroke="#651a1a" stroke-width="0.5" />
<polygon points="412.2,612.9 435.8,612.9 431.4,622.1 416.6,622.1" fill="#a92c2c" stroke="#651a1a" stroke-width="0.5" />
<polygon points="399.5,609.0 412.2,612.9 416.6,622.1 409.3,629.5" fill="#962727" stroke="#651a1a" stroke-width="0.5" />
<polygon points="448.5,609.0 435.8,612.9 431.4,622.1 438.7,629.5" fill="#842222" stroke="#651a1a" stroke-width="0.5" />
<polygon points="416.6,622.1 431.4,622.1 438.7,629.5 409.3,629.5" fill="#8f2525" stroke="#651a1a" stroke-width="0.5" />
</g>
<g opacity="1">
<polygon points="440.3,424.7 434.6,434.6 424.7,440.3 413.3,440.3 403.4,434.6 397.7,424.7 397.7,413.3 403.4,403.4 413.3,397.7 424.7,397.7 434.6,403.4 440.3,413.3" fill="#9c2828" />
<polygon points="405.8,406.9 432.2,406.9 434.4,430.0 404.7,430.0" fill="#b83030" />
<polygon points="434.6,434.6 424.7,440.3 413.3,440.3 403.4,434.6 404.7,430.0" fill="#802121" />
<polyline points="412.4,398.1 412.4,439.9" fill="none" stroke="#6e1c1c" stroke-width="0.6" stroke-opacity="0.5"/>
<polyline points="425.6,398.1 425.6,439.9" fill="none" stroke="#6e1c1c" stroke-width="0.6" stroke-opacity="0.5"/>
<polyline points="397.7,412.4 440.3,412.4" fill="none" stroke="#6e1c1c" stroke-width="0.6" stroke-opacity="0.5"/>
<polyline points="398.1,428.9 439.9,428.9" fill="none" stroke="#6e1c1c" stroke-width="0.6" stroke-opacity="0.5"/>
</g>
<circle cx="414" cy="418" r="21" fill="#8ca69f" fill-opacity="0.88"/>
<g opacity="1">
<polygon points="608.7,495.0 602.8,505.3 592.5,511.2 580.5,511.2 570.2,505.3 564.3,495.0 564.3,483.0 570.2,472.7 580.5,466.8 592.5,466.8 602.8,472.7 608.7,483.0" fill="#9c2828" />
<polygon points="572.7,476.4 600.3,476.4 602.6,500.5 571.5,500.5" fill="#b83030" />
<polygon points="602.8,505.3 592.5,511.2 580.5,511.2 570.2,505.3 571.5,500.5" fill="#802121" />
<polyline points="579.6,467.1 579.6,510.9" fill="none" stroke="#6e1c1c" stroke-width="0.6" stroke-opacity="0.5"/>
<polyline points="593.4,467.1 593.4,510.9" fill="none" stroke="#6e1c1c" stroke-width="0.6" stroke-opacity="0.5"/>
<polyline points="564.2,482.1 608.8,482.1" fill="none" stroke="#6e1c1c" stroke-width="0.6" stroke-opacity="0.5"/>
<polyline points="564.6,499.4 608.4,499.4" fill="none" stroke="#6e1c1c" stroke-width="0.6" stroke-opacity="0.5"/>
</g>
<clipPath id="w563"><polygon points="596,440 640,440 640,540 610,540"/></clipPath>
<g clip-path="url(#w563)"><circle cx="586.5" cy="489" r="23.5" fill="#6f807a" fill-opacity="0.75"/></g>
<g opacity="1">
<polygon points="466.2,541.5 460.3,551.8 450.0,557.7 438.0,557.7 427.7,551.8 421.8,541.5 421.8,529.5 427.7,519.2 438.0,513.3 450.0,513.3 460.3,519.2 466.2,529.5" fill="#9c2828" />
<polygon points="430.2,522.9 457.8,522.9 460.1,547.0 429.1,547.0" fill="#b83030" />
<polygon points="460.3,551.8 450.0,557.7 438.0,557.7 427.7,551.8 429.1,547.0" fill="#802121" />
<polyline points="437.1,513.6 437.1,557.4" fill="none" stroke="#6e1c1c" stroke-width="0.6" stroke-opacity="0.5"/>
<polyline points="450.9,513.6 450.9,557.4" fill="none" stroke="#6e1c1c" stroke-width="0.6" stroke-opacity="0.5"/>
<polyline points="421.7,528.6 466.3,528.6" fill="none" stroke="#6e1c1c" stroke-width="0.6" stroke-opacity="0.5"/>
<polyline points="422.1,545.9 465.9,545.9" fill="none" stroke="#6e1c1c" stroke-width="0.6" stroke-opacity="0.5"/>
</g>
<clipPath id="w418"><polygon points="447,500 480,500 480,570 450,570"/></clipPath>
<g clip-path="url(#w418)"><circle cx="444" cy="535.5" r="23.5" fill="#6a5a58" fill-opacity="0.75"/></g>
<clipPath id="w418b"><rect x="415" y="543" width="60" height="20"/></clipPath>
<g clip-path="url(#w418b)"><circle cx="444" cy="535.5" r="23.5" fill="#6c9a8c" fill-opacity="0.85"/></g>
<g opacity="0.65">
<polygon points="534.0,577.0 558.0,577.0 555.1,586.0 536.9,586.0" fill="#558e79" stroke="#315246" stroke-width="0.5" />
<polygon points="536.9,586.0 555.1,586.0 557.5,600.0 534.5,600.0" fill="#5a9680" stroke="#315246" stroke-width="0.5" />
<polygon points="522.0,596.0 534.0,577.0 536.9,586.0 534.5,600.0" fill="#518773" stroke="#315246" stroke-width="0.5" />
<polygon points="570.0,596.0 558.0,577.0 555.1,586.0 557.5,600.0" fill="#487866" stroke="#315246" stroke-width="0.5" />
<polygon points="534.5,600.0 557.5,600.0 553.2,609.4 538.8,609.4" fill="#528a75" stroke="#315246" stroke-width="0.5" />
<polygon points="522.0,596.0 534.5,600.0 538.8,609.4 531.6,617.0" fill="#497a68" stroke="#315246" stroke-width="0.5" />
<polygon points="570.0,596.0 557.5,600.0 553.2,609.4 560.4,617.0" fill="#406c5c" stroke="#315246" stroke-width="0.5" />
<polygon points="538.8,609.4 553.2,609.4 560.4,617.0 531.6,617.0" fill="#467563" stroke="#315246" stroke-width="0.5" />
</g>
<g opacity="1">
<polygon points="539.0,586.0 563.0,586.0 560.1,595.0 541.9,595.0" fill="#ae2d2d" stroke="#651a1a" stroke-width="0.5" />
<polygon points="541.9,595.0 560.1,595.0 562.5,609.0 539.5,609.0" fill="#b83030" stroke="#651a1a" stroke-width="0.5" />
<polygon points="527.0,605.0 539.0,586.0 541.9,595.0 539.5,609.0" fill="#a52b2b" stroke="#651a1a" stroke-width="0.5" />
<polygon points="575.0,605.0 563.0,586.0 560.1,595.0 562.5,609.0" fill="#932626" stroke="#651a1a" stroke-width="0.5" />
<polygon points="539.5,609.0 562.5,609.0 558.2,618.4 543.8,618.4" fill="#a92c2c" stroke="#651a1a" stroke-width="0.5" />
<polygon points="527.0,605.0 539.5,609.0 543.8,618.4 536.6,626.0" fill="#962727" stroke="#651a1a" stroke-width="0.5" />
<polygon points="575.0,605.0 562.5,609.0 558.2,618.4 565.4,626.0" fill="#842222" stroke="#651a1a" stroke-width="0.5" />
<polygon points="543.8,618.4 558.2,618.4 565.4,626.0 536.6,626.0" fill="#8f2525" stroke="#651a1a" stroke-width="0.5" />
</g>
<g opacity="1">
<polygon points="354.1,699.5 347.7,710.7 336.5,717.1 323.5,717.1 312.3,710.7 305.9,699.5 305.9,686.5 312.3,675.3 323.5,668.9 336.5,668.9 347.7,675.3 354.1,686.5" fill="#9c2828" />
<polygon points="315.0,679.2 345.0,679.2 347.5,705.5 313.8,705.5" fill="#b83030" />
<polygon points="347.7,710.7 336.5,717.1 323.5,717.1 312.3,710.7 313.8,705.5" fill="#802121" />
<polyline points="322.5,669.2 322.5,716.8" fill="none" stroke="#6e1c1c" stroke-width="0.6" stroke-opacity="0.5"/>
<polyline points="337.5,669.2 337.5,716.8" fill="none" stroke="#6e1c1c" stroke-width="0.6" stroke-opacity="0.5"/>
<polyline points="305.8,685.5 354.2,685.5" fill="none" stroke="#6e1c1c" stroke-width="0.6" stroke-opacity="0.5"/>
<polyline points="306.2,704.2 353.8,704.2" fill="none" stroke="#6e1c1c" stroke-width="0.6" stroke-opacity="0.5"/>
</g>
<clipPath id="b34"><rect x="300" y="706" width="60" height="20"/></clipPath>
<g clip-path="url(#b34)"><circle cx="330" cy="693" r="25" fill="#70908a" fill-opacity="0.8"/></g>
<clipPath id="b34b"><polygon points="331,660 342,660 344,706 334,706"/></clipPath>
<g clip-path="url(#b34b)"><circle cx="330" cy="693" r="25" fill="#4a4040" fill-opacity="0.45"/></g>
<g opacity="0.65">
<polygon points="252.0,600.5 274.0,600.5 271.4,609.3 254.6,609.3" fill="#558e79" stroke="#315246" stroke-width="0.5" />
<polygon points="254.6,609.3 271.4,609.3 273.6,622.9 252.4,622.9" fill="#5a9680" stroke="#315246" stroke-width="0.5" />
<polygon points="241.0,619.0 252.0,600.5 254.6,609.3 252.4,622.9" fill="#518773" stroke="#315246" stroke-width="0.5" />
<polygon points="285.0,619.0 274.0,600.5 271.4,609.3 273.6,622.9" fill="#487866" stroke="#315246" stroke-width="0.5" />
<polygon points="252.4,622.9 273.6,622.9 269.6,632.1 256.4,632.1" fill="#528a75" stroke="#315246" stroke-width="0.5" />
<polygon points="241.0,619.0 252.4,622.9 256.4,632.1 249.8,639.5" fill="#497a68" stroke="#315246" stroke-width="0.5" />
<polygon points="285.0,619.0 273.6,622.9 269.6,632.1 276.2,639.5" fill="#406c5c" stroke="#315246" stroke-width="0.5" />
<polygon points="256.4,632.1 269.6,632.1 276.2,639.5 249.8,639.5" fill="#467563" stroke="#315246" stroke-width="0.5" />
</g>
<g opacity="1">
<polygon points="257.0,610.5 278.0,610.5 275.5,619.3 259.5,619.3" fill="#2ca52c" stroke="#195f19" stroke-width="0.5" />
<polygon points="259.5,619.3 275.5,619.3 277.6,632.9 257.4,632.9" fill="#2fae2f" stroke="#195f19" stroke-width="0.5" />
<polygon points="246.5,629.0 257.0,610.5 259.5,619.3 257.4,632.9" fill="#2a9c2a" stroke="#195f19" stroke-width="0.5" />
<polygon points="288.5,629.0 278.0,610.5 275.5,619.3 277.6,632.9" fill="#258b25" stroke="#195f19" stroke-width="0.5" />
<polygon points="257.4,632.9 277.6,632.9 273.8,642.1 261.2,642.1" fill="#2ba02b" stroke="#195f19" stroke-width="0.5" />
<polygon points="246.5,629.0 257.4,632.9 261.2,642.1 254.9,649.5" fill="#268e26" stroke="#195f19" stroke-width="0.5" />
<polygon points="288.5,629.0 277.6,632.9 273.8,642.1 280.1,649.5" fill="#217d21" stroke="#195f19" stroke-width="0.5" />
<polygon points="261.2,642.1 273.8,642.1 280.1,649.5 254.9,649.5" fill="#248724" stroke="#195f19" stroke-width="0.5" />
</g>
<g opacity="0.65">
<polygon points="346.5,595.0 371.5,595.0 368.5,604.0 349.5,604.0" fill="#558e79" stroke="#315246" stroke-width="0.5" />
<polygon points="349.5,604.0 368.5,604.0 371.0,618.0 347.0,618.0" fill="#5a9680" stroke="#315246" stroke-width="0.5" />
<polygon points="334.0,614.0 346.5,595.0 349.5,604.0 347.0,618.0" fill="#518773" stroke="#315246" stroke-width="0.5" />
<polygon points="384.0,614.0 371.5,595.0 368.5,604.0 371.0,618.0" fill="#487866" stroke="#315246" stroke-width="0.5" />
<polygon points="347.0,618.0 371.0,618.0 366.5,627.4 351.5,627.4" fill="#528a75" stroke="#315246" stroke-width="0.5" />
<polygon points="334.0,614.0 347.0,618.0 351.5,627.4 344.0,635.0" fill="#497a68" stroke="#315246" stroke-width="0.5" />
<polygon points="384.0,614.0 371.0,618.0 366.5,627.4 374.0,635.0" fill="#406c5c" stroke="#315246" stroke-width="0.5" />
<polygon points="351.5,627.4 366.5,627.4 374.0,635.0 344.0,635.0" fill="#467563" stroke="#315246" stroke-width="0.5" />
</g>
<g opacity="1">
<polygon points="351.0,605.0 376.0,605.0 373.0,614.0 354.0,614.0" fill="#2ca52c" stroke="#195f19" stroke-width="0.5" />
<polygon points="354.0,614.0 373.0,614.0 375.5,628.0 351.5,628.0" fill="#2fae2f" stroke="#195f19" stroke-width="0.5" />
<polygon points="338.5,624.0 351.0,605.0 354.0,614.0 351.5,628.0" fill="#2a9c2a" stroke="#195f19" stroke-width="0.5" />
<polygon points="388.5,624.0 376.0,605.0 373.0,614.0 375.5,628.0" fill="#258b25" stroke="#195f19" stroke-width="0.5" />
<polygon points="351.5,628.0 375.5,628.0 371.0,637.4 356.0,637.4" fill="#2ba02b" stroke="#195f19" stroke-width="0.5" />
<polygon points="338.5,624.0 351.5,628.0 356.0,637.4 348.5,645.0" fill="#268e26" stroke="#195f19" stroke-width="0.5" />
<polygon points="388.5,624.0 375.5,628.0 371.0,637.4 378.5,645.0" fill="#217d21" stroke="#195f19" stroke-width="0.5" />
<polygon points="356.0,637.4 371.0,637.4 378.5,645.0 348.5,645.0" fill="#248724" stroke="#195f19" stroke-width="0.5" />
</g>
<defs><pattern id="chk" width="4" height="4" patternUnits="userSpaceOnUse"><rect width="4" height="4" fill="#d4d4fa"/><rect width="2" height="2" fill="#a848f0"/><rect x="2" y="2" width="2" height="2" fill="#a848f0"/></pattern></defs>
<polygon points="298.8,600.1 323.2,600.1 335.5,622.4 325.7,647.1 296.3,647.1 286.5,622.4" fill="url(#chk)" stroke="#e8e830" stroke-width="1.2" />
<polygon points="323.2,600.1 335.5,622.4 325.7,647.1 319.6,628.3" fill="#4848f0" fill-opacity="0.7" />
<polygon points="298.8,600.1 286.5,622.4 296.3,647.1 301.2,628.3" fill="#4848f0" fill-opacity="0.5" />
<text transform="translate(78,396.3) scale(1.42,1)" font-family="Liberation Serif" font-size="13" letter-spacing="0.15" fill="#1c1c1c" font-weight="normal">Stair1_N_1</text>
<text transform="translate(112.4,418.6) scale(1.42,1)" font-family="Liberation Serif" font-size="13" letter-spacing="0.15" fill="#1c1c1c" font-weight="normal">1_Eb_1</text>
<text transform="translate(240.5,393.6) scale(1.42,1)" font-family="Liberation Serif" font-size="13" letter-spacing="0.15" fill="#1c1c1c" font-weight="normal">flowpath01_1</text>
<text transform="translate(329.1,405.4) scale(1.42,1)" font-family="Liberation Serif" font-size="13" letter-spacing="0.15" fill="#1c1c1c" font-weight="normal">flowpath11_1</text>
<text transform="translate(399.2,391.4) scale(1.42,1)" font-family="Liberation Serif" font-size="13" letter-spacing="0.15" fill="#1c1c1c" font-weight="normal">flowpath12_1</text>
<text transform="translate(750.8,385.9) scale(1.42,1)" font-family="Liberation Serif" font-size="13" letter-spacing="0.15" fill="#1c1c1c" font-weight="normal">flowpa</text>
<text transform="translate(261,458.7) scale(1.42,1)" font-family="Liberation Serif" font-size="13" letter-spacing="0.15" fill="#1c1c1c" font-weight="normal">flowpath51</text>
<text transform="translate(193.4,480.4) scale(1.42,1)" font-family="Liberation Serif" font-size="13" letter-spacing="0.15" fill="#1c1c1c" font-weight="normal">flowpath28_1</text>
<text transform="translate(323,478.2) scale(1.42,1)" font-family="Liberation Serif" font-size="13" letter-spacing="0.15" fill="#1c1c1c" font-weight="normal">flowpath29_1</text>
<text transform="translate(506.1,474.2) scale(1.42,1)" font-family="Liberation Serif" font-size="13" letter-spacing="0.15" fill="#1c1c1c" font-weight="normal">flowpath41</text>
<text transform="translate(9.1,484.4) scale(1.42,1)" font-family="Liberation Serif" font-size="13" letter-spacing="0.15" fill="#1c1c1c" font-weight="normal">Stair1_W_1</text>
<text transform="translate(48,504.7) scale(1.42,1)" font-family="Liberation Serif" font-size="13" letter-spacing="0.15" fill="#1c1c1c" font-weight="normal">flowpath49</text>
<text transform="translate(80,532) scale(1.42,1)" font-family="Liberation Serif" font-size="13" letter-spacing="0.15" fill="#1c1c1c" font-weight="normal">Stair1_Ea_1</text>
<text transform="translate(441,519.2) scale(1.42,1)" font-family="Liberation Serif" font-size="13" letter-spacing="0.15" fill="#1c1c1c" font-weight="normal">flowpath15</text>
<text transform="translate(460.3,519.2) scale(1.42,1)" font-family="Liberation Serif" font-size="13" letter-spacing="0.15" fill="#1c1c1c" font-weight="normal">flowpath50</text>
<text transform="translate(505.2,554.8) scale(1.42,1)" font-family="Liberation Serif" font-size="13" letter-spacing="0.15" fill="#1c1c1c" font-weight="normal">flowpath40</text>
<text transform="translate(57.8,566.7) scale(1.42,1)" font-family="Liberation Serif" font-size="13" letter-spacing="0.15" fill="#1c1c1c" font-weight="normal">Stair1_S_1</text>
<text transform="translate(75.6,583.5) scale(1.42,1)" font-family="Liberation Serif" font-size="13" letter-spacing="0.15" fill="#1c1c1c" font-weight="normal">Door1_Hall_1</text>
<text transform="translate(269.1,574.4) scale(1.42,1)" font-family="Liberation Serif" font-size="13" letter-spacing="0.15" fill="#1c1c1c" font-weight="normal">flowpath44</text>
<text transform="translate(447.9,574) scale(1.42,1)" font-family="Liberation Serif" font-size="13" letter-spacing="0.15" fill="#1c1c1c" font-weight="normal">flowpath24_1</text>
<text transform="translate(172.5,629) scale(1.42,1)" font-family="Liberation Serif" font-size="13" letter-spacing="0.15" fill="#1c1c1c" font-weight="normal">flowpath57</text>
<text transform="translate(391.4,622.7) scale(1.42,1)" font-family="Liberation Serif" font-size="13" letter-spacing="0.15" fill="#1c1c1c" font-weight="normal">flowpath58</text>
<text transform="translate(212.2,642) scale(1.42,1)" font-family="Liberation Serif" font-size="13" letter-spacing="0.15" fill="#1c1c1c" font-weight="normal">unit-door-open</text>
<text transform="translate(337,638.8) scale(1.42,1)" font-family="Liberation Serif" font-size="13" letter-spacing="0.15" fill="#1c1c1c" font-weight="normal">flowpath43</text>
<text transform="translate(241.2,678.5) scale(1.42,1)" font-family="Liberation Serif" font-size="13" letter-spacing="0.15" fill="#1c1c1c" font-weight="normal">flowpath34</text>
<text transform="translate(210.8,709.7) scale(1.42,1)" font-family="Liberation Serif" font-size="13" letter-spacing="0.15" fill="#1c1c1c" font-weight="normal">flowpath46</text>
<text transform="translate(364.8,703.2) scale(1.42,1)" font-family="Liberation Serif" font-size="13" letter-spacing="0.15" fill="#1c1c1c" font-weight="normal">flowpath47</text>
<text transform="translate(819.4,592.5) scale(1.42,1)" font-family="Liberation Serif" font-size="13" letter-spacing="0.15" fill="#1c1c1c" font-weight="normal">flowpath48</text>
<text transform="translate(786.8,698.5) scale(1.42,1)" font-family="Liberation Serif" font-size="13" letter-spacing="0.15" fill="#1c1c1c" font-weight="normal">flowpath35</text>
<text transform="translate(1070.2,521.1) scale(1.42,1)" font-family="Liberation Serif" font-size="13" letter-spacing="0.15" fill="#1c1c1c" font-weight="normal">flowpath36</text>
<text transform="translate(259.4,640.9) scale(1.38,1)" font-family="Liberation Serif" font-size="13" letter-spacing="0.1" fill="#f4f020" font-weight="bold">unit-door-open</text>
</svg>

<div id="tb">
  <div class="box" style="left:7px;top:10px;width:163px;height:22px;"></div>
  <div class="t" style="left:14px;top:15px;">unit-door-open</div>
  <div class="box" style="left:7px;top:33px;width:124px;height:22px;"></div>
  <div class="box rnd" style="left:133px;top:35px;width:18px;height:18px;border-color:#cfcfcf;"></div>
  <div class="t" style="left:140px;top:38px;">-</div>
  <div class="box rnd" style="left:152px;top:35px;width:18px;height:18px;border-color:#cfcfcf;"></div>
  <div class="t" style="left:157px;top:38px;">+</div>
  <div class="t" style="left:-1px;top:59px;">sible</div>
  <div class="sep" style="left:177px;"></div>

  <div class="t b" style="left:185px;top:6px;">Properties</div>
  <div class="t" style="left:205px;top:30px;">Element:</div>
  <div class="box rnd" style="left:255px;top:24px;width:114px;height:24px;border-color:#c4c4c4;"></div>
  <svg style="position:absolute;left:263px;top:30px;" width="14" height="13" viewBox="0 0 14 13"><rect x="0.5" y="0.5" width="12" height="11" fill="#fff" stroke="#e040e0"/><path d="M3 10 C5 10 5 2 10 2" fill="none" stroke="#e040e0" stroke-width="1.2"/></svg>
  <div class="t" style="left:282px;top:30px;">Door-SO</div>
  <div class="chev" style="left:354px;top:31px;"></div>
  <div class="t lk" style="left:373px;top:30px;">Edit...</div>
  <div class="t" style="left:205px;top:54px;">Marker:</div>
  <div class="t lk" style="left:255px;top:54px;">Default, 1.0 m</div>
  <div class="sep" style="left:410px;"></div>

  <div class="t b" style="left:418px;top:6px;">Leakage Area</div>
  <div class="t" style="left:438px;top:29px;">Area:</div>
  <div class="box" style="left:495px;top:24px;width:90px;height:22px;"></div>
  <div class="t" style="left:502px;top:29px;">10.76391 ft²</div>
  <div class="box rnd" style="left:439px;top:54px;width:13px;height:13px;border-color:#555;border-radius:2px;"></div>
  <div class="t" style="left:459px;top:55px;">Items:</div>
  <div class="box dis" style="left:495px;top:50px;width:90px;height:22px;"></div>
  <div class="t gr" style="left:502px;top:55px;">1.0</div>
  <div class="sep" style="left:592px;"></div>

  <div class="t b gr" style="left:600px;top:6px;">Wind Pressure</div>
  <div style="position:absolute;left:621px;top:28px;width:13px;height:13px;border:1px solid #bdbdbd;border-radius:50%;background:#f0f0f0;"></div>
  <div style="position:absolute;left:625px;top:32px;width:7px;height:7px;border-radius:50%;background:#a9a9a9;"></div>
  <div class="t gr" style="left:640px;top:29px;">Constant:</div>
  <div class="box dis" style="left:696px;top:24px;width:90px;height:22px;"></div>
  <div class="t gr" style="left:703px;top:29px;">0.0 inWC</div>
  <div style="position:absolute;left:621px;top:55px;width:13px;height:13px;border:1px solid #bdbdbd;border-radius:50%;background:#f0f0f0;"></div>
  <div class="t gr" style="left:640px;top:56px;">Variable:</div>
  <div class="box dis rnd" style="left:696px;top:51px;width:90px;height:23px;"></div>
  <div class="chev" style="left:772px;top:57px;border-color:#999;"></div>
  <div class="sep" style="left:793px;"></div>

  <div class="t b" style="left:801px;top:6px;">Geometry</div>
  <div class="t" style="left:821px;top:29px;">Rel. Height:</div>
  <div class="box rnd" style="left:886px;top:24px;width:88px;height:23px;border-color:#c4c4c4;"></div>
  <div class="t" style="left:893px;top:29px;">Custom</div>
  <div class="chev" style="left:960px;top:31px;"></div>
  <div class="box" style="left:979px;top:25px;width:90px;height:22px;"></div>
  <div class="t" style="left:986px;top:29px;">0.0 ft</div>
  <div class="t" style="left:821px;top:54px;">Direction:</div>
  <div class="t lk" style="left:886px;top:54px;">Unit 1 → hall</div>
  <div class="sep" style="left:1076px;"></div>

  <div class="t b" style="left:1084px;top:6px;">Schedule</div>
  <div style="position:absolute;left:1085px;top:26px;width:11px;height:11px;border:1.5px solid #6aa6ec;border-radius:3px;background:#fff;"></div>
  <svg style="position:absolute;left:1086px;top:27px;" width="12" height="12" viewBox="0 0 12 12"><path d="M2.3 6.5 L5 9.3 L10 3" fill="none" stroke="#4a94e8" stroke-width="1.5"/></svg>
  <div class="t" style="left:1105px;top:27px;">Schedule Multiplier:</div>
  <div class="t lk" style="left:1214px;top:27px;text-decoration:underline;text-underline-offset:2px;color:#2a62b0;">t(0) = 0.0, ...</div>
</div>


<div id="dshadow" style="position:absolute;left:800px;top:134px;width:721px;height:367px;border-radius:8px;box-shadow:0 18px 44px rgba(0,0,0,0.40),0 0 14px rgba(0,0,0,0.10);"></div>
<div id="dlg" style="position:absolute;left:799px;top:133px;width:723px;height:369px;box-sizing:border-box;border:1px solid #a6a6a6;border-radius:8px;background:#f2f2f2;overflow:hidden;">
</div>
<div id="dc" style="position:absolute;left:0;top:0;">
  <svg style="position:absolute;left:808px;top:140px;" width="16" height="16" viewBox="0 0 16 16"><rect width="16" height="16" fill="#6a2aa0"/><text x="8" y="14.5" text-anchor="middle" font-family="Liberation Serif" font-weight="bold" font-size="12" fill="#fff">V</text><path d="M4.5 3.2 H11 M9.3 1.6 L11.2 3.2 L9.3 4.8" fill="none" stroke="#fff" stroke-width="1"/></svg>
  <div class="t" style="left:832px;top:142px;">Edit Schedule Multiplier:</div>
  <svg style="position:absolute;left:1493px;top:142px;" width="12" height="12" viewBox="0 0 12 12"><path d="M1 1 L11 11 M11 1 L1 11" stroke="#111" stroke-width="1.1"/></svg>

  <div class="t" style="left:812px;top:180px;">Initial Value:</div>
  <div class="box" style="left:880px;top:175px;width:90px;height:22px;"></div>
  <div class="t" style="left:887px;top:180px;">0.0</div>
  <div class="t" style="left:812px;top:207px;">Shape:</div>
  <div class="box rnd" style="left:880px;top:201px;width:97px;height:24px;border-color:#c4c4c4;"></div>
  <div class="t" style="left:887px;top:207px;">Rectangular</div>
  <div class="chev" style="left:963px;top:207px;"></div>

  <div class="t" style="left:812px;top:235px;">Timed Values</div>
  <div style="position:absolute;left:889px;top:240px;width:621px;height:1px;background:#d5d5d5;"></div>

  <div style="position:absolute;left:812px;top:253px;width:146px;height:198px;box-sizing:border-box;border:1px solid #84a9d3;background:#fff;"></div>
  <div style="position:absolute;left:813px;top:254px;width:13px;height:24px;background:#f0f0f0;"></div>
  <div style="position:absolute;left:826px;top:278px;width:1px;height:40px;background:#a6a6a6;"></div>
  <div style="position:absolute;left:891px;top:254px;width:1px;height:64px;background:#a6a6a6;"></div>
  <div style="position:absolute;left:956px;top:254px;width:1px;height:24px;background:#a6a6a6;"></div>
  <div style="position:absolute;left:813px;top:278px;width:144px;height:1px;background:#a6a6a6;"></div>
  <div style="position:absolute;left:813px;top:298px;width:144px;height:1px;background:#a6a6a6;"></div>
  <div style="position:absolute;left:813px;top:318px;width:144px;height:1px;background:#a6a6a6;"></div>
  <div style="position:absolute;left:827px;top:299px;width:64px;height:19px;background:#99c9f4;"></div>
  <div class="t" style="left:847px;top:260px;">Time</div>
  <div class="t" style="left:896px;top:260px;">Schedule...</div>
  <div class="t" style="left:819px;top:283px;">1</div>
  <div class="t" style="left:850px;top:283px;">1.0 min</div>
  <div class="t" style="left:937px;top:283px;">1.0</div>
  <div class="t" style="left:819px;top:303px;font-size:10px;">*</div>
  <div class="box" style="left:969px;top:253px;width:119px;height:22px;border-color:#c9c9c9;border-radius:4px;"></div>
  <div class="box" style="left:969px;top:280px;width:119px;height:22px;border-color:#c9c9c9;border-radius:4px;"></div>
  <div class="box" style="left:969px;top:313px;width:119px;height:22px;border-color:#c9c9c9;border-radius:4px;"></div>
  <div class="box" style="left:969px;top:340px;width:119px;height:22px;border-color:#c9c9c9;border-radius:4px;"></div>
  <div class="box" style="left:969px;top:373px;width:119px;height:22px;border-color:#c9c9c9;border-radius:4px;"></div>
  <div class="box" style="left:969px;top:401px;width:119px;height:22px;border-color:#c9c9c9;border-radius:4px;"></div>
  <div class="box" style="left:969px;top:429px;width:119px;height:22px;border-color:#c9c9c9;border-radius:4px;"></div>

  <div style="position:absolute;left:1092px;top:253px;width:418px;height:198px;box-sizing:border-box;border:2px solid #000;background:#fff;"></div>
  <svg style="position:absolute;left:991px;top:258px;" width="15" height="11" viewBox="0 0 15 11"><rect x="3.5" y="0.5" width="10" height="9" fill="#dcdcf0" stroke="#33336e"/><path d="M3.5 5 H13.5 M7 0.5 V9.5 M10.3 0.5 V9.5" stroke="#33336e" fill="none"/><path d="M0.5 2.5 L2.8 4.8 L0.5 7" stroke="#000" fill="none"/></svg>
  <div class="t" style="left:1011px;top:258px;font-size:11.5px;">Insert Row</div>
  <svg style="position:absolute;left:984px;top:285px;" width="15" height="12" viewBox="0 0 15 12"><rect x="1.5" y="0.5" width="10" height="10.5" fill="#dcdcf0" stroke="#33336e"/><path d="M1.5 3.5 H11.5 M1.5 7.5 H11.5 M5 0.5 V3.5 M8 3.5 V7.5 M5 7.5 V11" stroke="#33336e" fill="none"/><path d="M0 5.5 H14" stroke="#000"/></svg>
  <div class="t" style="left:1004px;top:285px;font-size:11.5px;">Remove Row</div>
  <svg style="position:absolute;left:994px;top:319px;" width="14" height="9" viewBox="0 0 14 9"><path d="M1 7.5 L7 1.5 L13 7.5" fill="none" stroke="#30305a" stroke-width="3"/><path d="M1 7.5 L7 1.5 L13 7.5" fill="none" stroke="#a8a8e0" stroke-width="1.4"/></svg>
  <div class="t" style="left:1014px;top:318px;font-size:11.5px;">Move Up</div>
  <svg style="position:absolute;left:986px;top:346px;" width="14" height="9" viewBox="0 0 14 9"><path d="M1 1.5 L7 7.5 L13 1.5" fill="none" stroke="#30305a" stroke-width="3"/><path d="M1 1.5 L7 7.5 L13 1.5" fill="none" stroke="#a8a8e0" stroke-width="1.4"/></svg>
  <div class="t" style="left:1006px;top:344px;font-size:11.5px;">Move Down</div>
  <svg style="position:absolute;left:1005px;top:378px;" width="12" height="12" viewBox="0 0 12 12"><path d="M0.5 0.5 H5 L6 1.5 V9 H0.5 Z" fill="#fff" stroke="#000"/><path d="M3.5 3.5 H8 L11 6.5 V11.5 H3.5 Z" fill="#c8c8f0" stroke="#000"/></svg>
  <div class="t" style="left:1024px;top:377px;font-size:11.5px;">Copy</div>
  <svg style="position:absolute;left:1006px;top:405px;" width="11" height="14" viewBox="0 0 11 14"><rect x="1" y="2.5" width="9" height="11" rx="1.5" fill="#c9a88a" stroke="#222"/><rect x="3" y="0.5" width="5" height="3.5" fill="#fff" stroke="#222"/></svg>
  <div class="t" style="left:1024px;top:405px;font-size:11.5px;">Paste</div>
  <svg style="position:absolute;left:1010px;top:432px;" width="13" height="14" viewBox="0 0 13 14"><path d="M2.5 0.5 L9 10 M10.5 0.5 L4 10" stroke="#000" fill="none"/><circle cx="3.3" cy="11" r="2.3" fill="#3a3aa0" stroke="#111"/><circle cx="9.7" cy="11" r="2.3" fill="#3a3aa0" stroke="#111"/></svg>
  <div class="t" style="left:1029px;top:433px;font-size:11.5px;">Cut</div>
<svg style="position:absolute;left:1092px;top:253px;" width="418" height="198" viewBox="1092 253 418 198" font-family="Liberation Sans">
<text x="1300" y="272" text-anchor="middle" font-weight="bold" font-size="11.7">Schedule Multiplier: over Time</text>
<rect x="1151" y="275" width="2" height="153" fill="#000"/>
<rect x="1151" y="426" width="299" height="2" fill="#000"/>
<rect x="1149" y="275" width="6" height="2" fill="#000"/>
<text x="1147" y="280" text-anchor="end" font-size="7" font-weight="bold" letter-spacing="-0.3">1.00</text>
<rect x="1149" y="306" width="6" height="2" fill="#000"/>
<text x="1147" y="311" text-anchor="end" font-size="7" font-weight="bold" letter-spacing="-0.3">.800</text>
<rect x="1149" y="336.5" width="6" height="2" fill="#000"/>
<text x="1147" y="341.5" text-anchor="end" font-size="7" font-weight="bold" letter-spacing="-0.3">.600</text>
<rect x="1149" y="367" width="6" height="2" fill="#000"/>
<text x="1147" y="372" text-anchor="end" font-size="7" font-weight="bold" letter-spacing="-0.3">.400</text>
<rect x="1149" y="397" width="6" height="2" fill="#000"/>
<text x="1147" y="402" text-anchor="end" font-size="7" font-weight="bold" letter-spacing="-0.3">.200</text>
<rect x="1149" y="426" width="6" height="2" fill="#000"/>
<text x="1147" y="431" text-anchor="end" font-size="7" font-weight="bold" letter-spacing="-0.3">0.0</text>
<rect x="1151.0" y="424" width="2" height="6" fill="#000"/>
<text x="1152.0" y="439" text-anchor="middle" font-size="7" font-weight="bold" letter-spacing="-0.3">0.0</text>
<rect x="1193.6" y="424" width="2" height="6" fill="#000"/>
<text x="1194.6" y="439" text-anchor="middle" font-size="7" font-weight="bold" letter-spacing="-0.3">10.00</text>
<rect x="1236.1" y="424" width="2" height="6" fill="#000"/>
<text x="1237.1" y="439" text-anchor="middle" font-size="7" font-weight="bold" letter-spacing="-0.3">20.00</text>
<rect x="1278.7" y="424" width="2" height="6" fill="#000"/>
<text x="1279.7" y="439" text-anchor="middle" font-size="7" font-weight="bold" letter-spacing="-0.3">30.00</text>
<rect x="1321.3" y="424" width="2" height="6" fill="#000"/>
<text x="1322.3" y="439" text-anchor="middle" font-size="7" font-weight="bold" letter-spacing="-0.3">40.00</text>
<rect x="1363.8" y="424" width="2" height="6" fill="#000"/>
<text x="1364.8" y="439" text-anchor="middle" font-size="7" font-weight="bold" letter-spacing="-0.3">50.00</text>
<rect x="1406.4" y="424" width="2" height="6" fill="#000"/>
<text x="1407.4" y="439" text-anchor="middle" font-size="7" font-weight="bold" letter-spacing="-0.3">60.00</text>
<rect x="1449.0" y="424" width="2" height="6" fill="#000"/>
<text x="1450.0" y="439" text-anchor="middle" font-size="7" font-weight="bold" letter-spacing="-0.3">70.00</text>
<text x="1301" y="448.5" text-anchor="middle" font-size="9">Time (s)</text>
<text transform="translate(1113,352) rotate(-90)" text-anchor="middle" font-size="9">Schedule Multiplier:</text>
<rect x="1418.5" y="276" width="1.2" height="151" fill="#1010f0"/>
</svg>
  <div style="position:absolute;left:1361px;top:468px;width:72px;height:22px;box-sizing:border-box;border:2px solid #3d8ee6;border-radius:4px;background:#fff;"></div>
  <div class="t" style="left:1389px;top:473px;">OK</div>
  <div class="box" style="left:1438px;top:468px;width:72px;height:22px;border-color:#c9c9c9;border-radius:4px;"></div>
  <div class="t" style="left:1456px;top:473px;">Cancel</div>
</div>
</body></html>
